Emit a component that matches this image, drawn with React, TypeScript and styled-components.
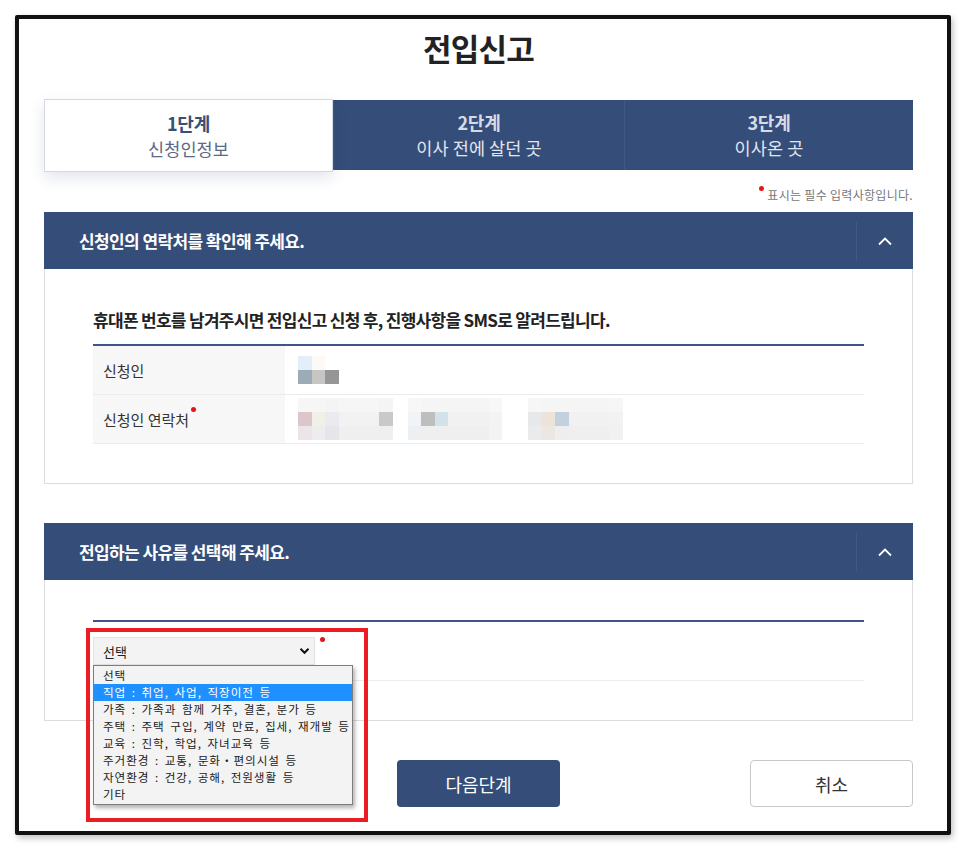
import styled, { createGlobalStyle } from 'styled-components';

const NAVY = '#344d79';

const GlobalStyle = createGlobalStyle`
  html, body {
    margin: 0;
    padding: 0;
    background: #fff;
  }
  body {
    font-family: "Noto Sans CJK KR", "Noto Sans", sans-serif;
    color: #333;
  }
  * {
    box-sizing: border-box;
  }
`;

const steps = [
  { no: '1단계', name: '신청인정보' },
  { no: '2단계', name: '이사 전에 살던 곳' },
  { no: '3단계', name: '이사온 곳' },
];

const reasons = [
  '선택',
  '직업 : 취업, 사업, 직장이전 등',
  '가족 : 가족과 함께 거주, 결혼, 분가 등',
  '주택 : 주택 구입, 계약 만료, 집세, 재개발 등',
  '교육 : 진학, 학업, 자녀교육 등',
  '주거환경 : 교통, 문화・편의시설 등',
  '자연환경 : 건강, 공해, 전원생활 등',
  '기타',
];

// blurred-out personal data, one colour per mosaic cell
const nameMosaic = [
  ['#e4eefa', '#fdf9f6', 'transparent'],
  ['#9cacb7', '#c6c7c4', '#969696'],
];

const phoneMosaics = [
  {
    gap: 0,
    cells: [
      ['#f6f6f6', '#f6f6f6', '#f4f4f6', '#f6f6f6', '#f6f6f6', '#f6f6f6', '#f4f4f4'],
      ['#dcc6cc', '#f0f0e6', '#ebebef', '#f2f2f2', '#f2f2f2', '#f2f2f2', '#c9c9c9'],
      ['#ebe4eb', '#ededed', '#e6e6ea', '#efefef', '#efefef', '#efefef', '#efefef'],
    ],
  },
  {
    gap: 15,
    cells: [
      ['#f7f7f7', '#f5f5f5', '#f5f5f5', '#f5f5f5', '#f5f5f5', '#f5f5f5', '#f7f7f7'],
      ['#f1f3f5', '#bdbfbe', '#d2e2e8', '#f1f1f1', '#f1f1f1', '#f1f1f1', '#f3f3f3'],
      ['#ecf0f3', '#efefef', '#efefef', '#efefef', '#efefef', '#efefef', '#f3f3f3'],
    ],
  },
  {
    gap: 26,
    cells: [
      ['#f6f6f6', '#f5f5f5', '#f5f5f5', '#f5f5f5', '#f5f5f5', '#f5f5f5', '#f6f6f6'],
      ['#e7e8ea', '#ece4d8', '#c3d0de', '#f1f1f1', '#f1f1f1', '#f1f1f1', '#f2f2f2'],
      ['#ebebeb', '#ede7e3', '#eeeeee', '#efefef', '#efefef', '#efefef', '#f1f1f1'],
    ],
  },
];

function ChevronUp() {
  return (
    <svg width="16" height="10" viewBox="0 0 16 10" fill="none">
      <path d="M2 8.5 L8 2.5 L14 8.5" stroke="#fff" strokeWidth="1.8" />
    </svg>
  );
}

function ChevronDown() {
  return (
    <svg width="11" height="8" viewBox="0 0 11 8" fill="none">
      <path d="M1.5 1.8 L5.5 5.8 L9.5 1.8" stroke="#111" strokeWidth="2" />
    </svg>
  );
}

function Mosaic({ cells, gap = 0 }: { cells: string[][]; gap?: number }) {
  return (
    <MosaicGrid $cols={cells[0].length} $offset={gap}>
      {cells.flat().map((c, i) => (
        <MosaicCell key={i} style={{ background: c }} />
      ))}
    </MosaicGrid>
  );
}

export default function App() {
  return (
    <Page>
      <GlobalStyle />
      <Frame>
        <Content>
          <Title>전입신고</Title>

          <Steps>
            {steps.map((s, i) => (
              <Step key={s.no} $active={i === 0}>
                <StepNo $active={i === 0}>{s.no}</StepNo>
                <StepName $active={i === 0}>{s.name}</StepName>
              </Step>
            ))}
          </Steps>

          <RequiredNote>
            <Dot /> 표시는 필수 입력사항입니다.
          </RequiredNote>

          <Section>
            <SectionHeader>
              <SectionTitle>신청인의 연락처를 확인해 주세요.</SectionTitle>
              <ToggleButton>
                <ChevronUp />
              </ToggleButton>
            </SectionHeader>
            <SectionBody>
              <Caption>휴대폰 번호를 남겨주시면 전입신고 신청 후, 진행사항을 SMS로 알려드립니다.</Caption>
              <Table>
                <Row>
                  <Label>신청인</Label>
                  <Value>
                    <Mosaic cells={nameMosaic} />
                  </Value>
                </Row>
                <Row>
                  <Label>
                    신청인 연락처
                    <Dot />
                  </Label>
                  <Value>
                    {phoneMosaics.map((m, i) => (
                      <Mosaic key={i} cells={m.cells} gap={m.gap} />
                    ))}
                  </Value>
                </Row>
              </Table>
            </SectionBody>
          </Section>

          <Section>
            <SectionHeader>
              <SectionTitle>전입하는 사유를 선택해 주세요.</SectionTitle>
              <ToggleButton>
                <ChevronUp />
              </ToggleButton>
            </SectionHeader>
            <SectionBody>
              <Table>
                <SelectRow>
                  <SelectWrap>
                    <SelectBox>
                      <span>선택</span>
                      <ChevronDown />
                    </SelectBox>
                    <Dot />
                    <OptionList>
                      {reasons.map((r, i) => (
                        <Option key={r} $selected={i === 1}>
                          {r}
                        </Option>
                      ))}
                    </OptionList>
                    <Highlight />
                  </SelectWrap>
                </SelectRow>
              </Table>
            </SectionBody>
          </Section>

          <Buttons>
            <span />
            <PrimaryButton>다음단계</PrimaryButton>
            <GhostButton>취소</GhostButton>
          </Buttons>
        </Content>
      </Frame>
    </Page>
  );
}

const Page = styled.div`
  width: 966px;
  height: 850px;
  padding: 15px 0 0 15px;
`;

const Frame = styled.div`
  width: 936px;
  height: 820px;
  border: 4px solid #111;
  border-radius: 2px;
  background: #fff;
  box-shadow: 2px 3px 6px rgba(0, 0, 0, 0.25);
  padding: 11px 34px 0 25px;
`;

const Content = styled.div`
  width: 869px;
`;

const Title = styled.h1`
  margin: 0;
  font-size: 31px;
  line-height: 36px;
  font-weight: 700;
  color: #222;
  text-align: center;
  letter-spacing: -0.8px;
`;

const Steps = styled.div`
  display: grid;
  grid-template-columns: 289px 291px 289px;
  margin-top: 34px;
  height: 70px;
  background: ${NAVY};
`;

const Step = styled.div<{ $active?: boolean }>`
  display: flex;
  flex-direction: column;
  align-items: center;
  justify-content: center;
  background: ${(p) => (p.$active ? '#fff' : NAVY)};
  border: ${(p) => (p.$active ? '1px solid #d3d8e3' : 'none')};
  border-left: ${(p) => (p.$active ? '1px solid #d3d8e3' : '1px solid #3f5884')};
  margin: ${(p) => (p.$active ? '-1px 0 -2px 0' : '0')};
  box-shadow: ${(p) => (p.$active ? '0 6px 14px rgba(40, 60, 100, 0.13)' : 'none')};
  position: relative;
  z-index: ${(p) => (p.$active ? 1 : 0)};
`;

const StepNo = styled.div<{ $active?: boolean }>`
  font-size: 18px;
  line-height: 26px;
  font-weight: 700;
  letter-spacing: -0.2px;
  color: ${(p) => (p.$active ? '#3a4f74' : '#d6dbe5')};
`;

const StepName = styled.div<{ $active?: boolean }>`
  font-size: 17.5px;
  line-height: 26px;
  letter-spacing: 0.1px;
  color: ${(p) => (p.$active ? '#5b6a84' : '#e2e6ee')};
`;

const RequiredNote = styled.div`
  display: flex;
  justify-content: flex-end;
  align-items: flex-start;
  gap: 3px;
  margin-top: 15px;
  height: 27px;
  font-size: 12px;
  line-height: 20px;
  color: #777;
  letter-spacing: 0.3px;
`;

const Dot = styled.span`
  display: inline-block;
  width: 5px;
  height: 5px;
  border-radius: 50%;
  background: #e8121b;
  margin-top: 1px;
  align-self: flex-start;
  vertical-align: top;
`;

const Section = styled.section`
  margin-bottom: 39px;
`;

const SectionHeader = styled.div`
  display: flex;
  align-items: center;
  justify-content: space-between;
  height: 57px;
  background: ${NAVY};
  padding-left: 35px;
`;

const SectionTitle = styled.h2`
  margin: 0;
  font-size: 17px;
  font-weight: 700;
  color: #fff;
  letter-spacing: -0.6px;
`;

const ToggleButton = styled.div`
  display: flex;
  align-items: center;
  justify-content: center;
  width: 57px;
  height: 38px;
  border-left: 1px solid #41598a;
`;

const SectionBody = styled.div`
  border: 1px solid #dcdcdc;
  border-top: none;
  padding: 40px 48px 39px 48px;
`;

const Caption = styled.p`
  margin: 0 0 13px;
  font-size: 17px;
  line-height: 22px;
  font-weight: 700;
  color: #222;
  letter-spacing: -0.7px;
`;

const Table = styled.div`
  border-top: 2px solid #3f5485;
`;

const Row = styled.div`
  display: grid;
  grid-template-columns: 192px 1fr;
  height: 49px;
  border-bottom: 1px solid #ececec;
`;

const Label = styled.div`
  display: flex;
  align-items: center;
  gap: 2px;
  padding-left: 10px;
  background: #f7f7f7;
  font-size: 15px;
  color: #333;

  ${Dot} {
    margin-top: 12px;
  }
`;

const Value = styled.div`
  display: flex;
  align-items: center;
  padding-left: 13px;
`;

const MosaicGrid = styled.div<{ $cols: number; $offset: number }>`
  display: grid;
  grid-template-columns: repeat(${(p) => p.$cols}, 13.5px);
  grid-auto-rows: 14px;
  margin-left: ${(p) => p.$offset}px;
`;

const MosaicCell = styled.div``;

const SelectRow = styled.div`
  height: 59px;
  padding-top: 15px;
  border-bottom: 1px solid #ececec;
`;

const SelectWrap = styled.div`
  position: relative;
  display: flex;
  align-items: flex-start;
  gap: 5px;
  width: max-content;

  ${Dot} {
    margin-top: 0;
  }
`;

const SelectBox = styled.div`
  display: flex;
  align-items: center;
  justify-content: space-between;
  width: 222px;
  height: 28px;
  padding: 0 4px 0 9px;
  border: 1px solid #e2e2e2;
  background: #f3f3f3;
  font-size: 13px;
  color: #222;
`;

const OptionList = styled.ul`
  position: absolute;
  left: 0;
  top: 28px;
  width: 260px;
  margin: 0;
  padding: 1px 0;
  list-style: none;
  background: #f3f3f3;
  border: 1px solid #7d7d7d;
  box-shadow: 2px 3px 4px rgba(0, 0, 0, 0.3);
  z-index: 2;
`;

const Option = styled.li<{ $selected?: boolean }>`
  height: 17px;
  padding-left: 9px;
  font-size: 11.6px;
  line-height: 17px;
  letter-spacing: 0.95px;
  word-spacing: 2px;
  white-space: nowrap;
  color: ${(p) => (p.$selected ? '#fff' : '#222')};
  background: ${(p) => (p.$selected ? '#1e90ff' : 'transparent')};
`;

const Highlight = styled.div`
  position: absolute;
  left: -7px;
  top: -9px;
  width: 282px;
  height: 194px;
  border: 4px solid #ec1c24;
  z-index: 3;
  pointer-events: none;
`;

const Buttons = styled.div`
  display: grid;
  grid-template-columns: 1fr 163px 1fr;
  align-items: center;
  margin-top: 1px;
`;

const PrimaryButton = styled.button`
  height: 47px;
  border: none;
  border-radius: 4px;
  background: ${NAVY};
  color: #fff;
  font-family: inherit;
  font-size: 18px;
`;

const GhostButton = styled.button`
  justify-self: end;
  width: 163px;
  height: 47px;
  border: 1px solid #c8c8c8;
  border-radius: 4px;
  background: #fff;
  color: #333;
  font-family: inherit;
  font-size: 18px;
`;
